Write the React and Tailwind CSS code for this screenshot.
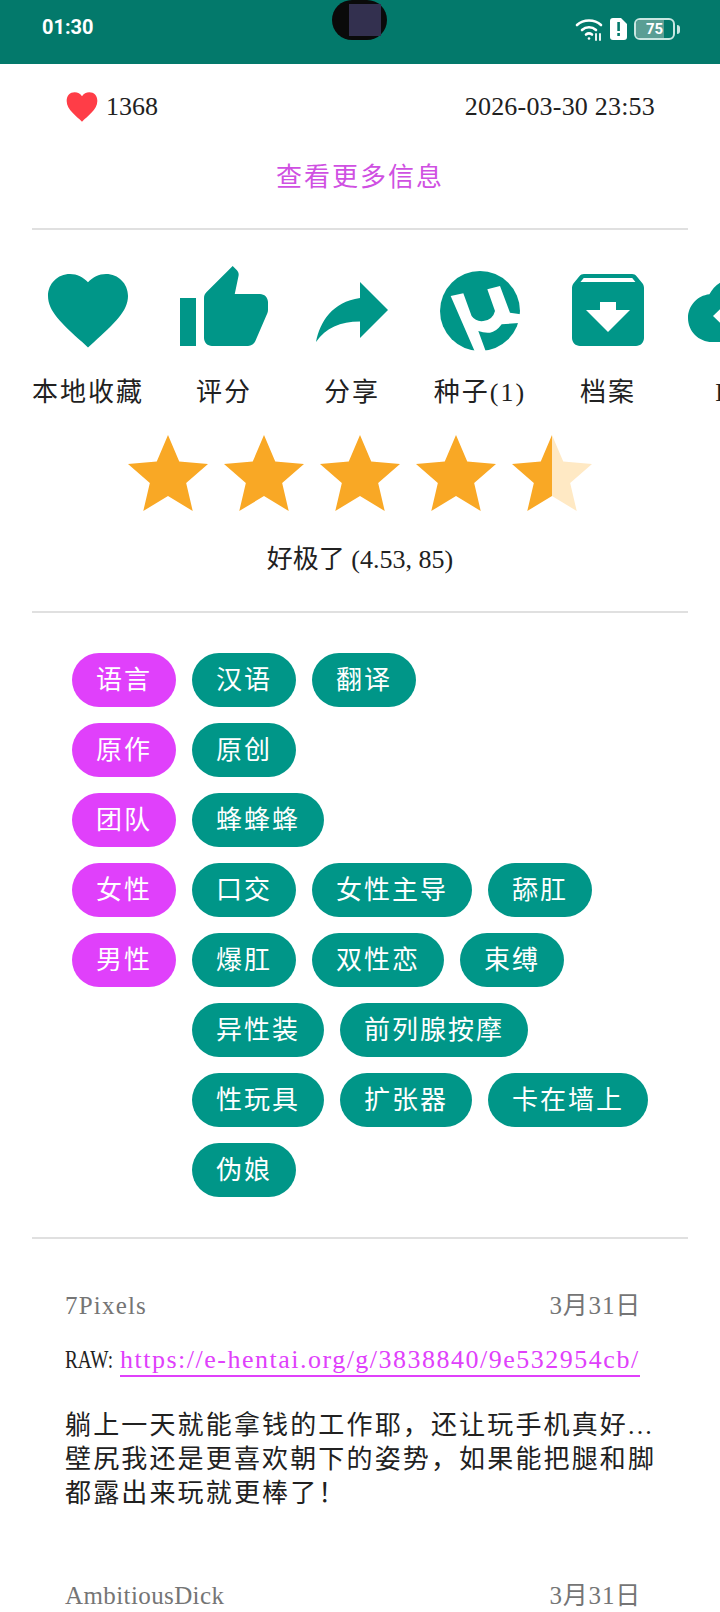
const serif = '"Liberation Serif", "Noto Sans CJK SC", serif';

const actions = [
    { label: '本地收藏', width: 'w-32', d: 'M12 21.35l-1.45-1.32C5.4 15.36 2 12.28 2 8.5 2 5.42 4.42 3 7.5 3c1.74 0 3.41.81 4.5 2.09C13.09 3.81 14.76 3 16.5 3 19.58 3 22 5.42 22 8.5c0 3.78-3.4 6.86-8.55 11.54L12 21.35z' },
    { label: '评分', width: 'w-28', d: 'M1 21h4V9H1v12zm22-11c0-1.1-.9-2-2-2h-6.31l.95-4.57.03-.32c0-.41-.17-.79-.44-1.06L14.17 1 7.59 7.59C7.22 7.95 7 8.45 7 9v10c0 1.1.9 2 2 2h9c.83 0 1.54-.5 1.84-1.22l3.02-7.05c.09-.23.14-.47.14-.73v-2z' },
    { label: '分享', width: 'w-28', d: 'M14 9V5l7 7-7 7v-4.1c-5 0-8.5 1.6-11 5.1 1-5 4-10 11-11z' },
    { label: '种子(1)', width: 'w-28', torrent: true },
    { label: '档案', width: 'w-28', d: 'M20.54 5.23l-1.39-1.68C18.88 3.21 18.47 3 18 3H6c-.47 0-.88.21-1.16.55L3.46 5.23C3.17 5.57 3 6.02 3 6.500V19c0 1.1.9 2 2 2h14c1.1 0 2-.9 2-2V6.500c0-.48-.17-.93-.46-1.27zM12 17.5L6.5 12H10v-2h4v2h3.5L12 17.5zM5.12 5l.81-1h12.12l.81 1H5.12z' },
    { label: 'H@H', width: 'w-28', labelClass: 'ml-[26px]', d: 'M19.35 10.04C18.67 6.59 15.64 4 12 4 9.11 4 6.6 5.64 5.35 8.04 2.34 8.36 0 10.91 0 14c0 3.31 2.69 6 6 6h13c2.76 0 5-2.24 5-5 0-2.64-2.05-4.78-4.65-4.96zM6.25 13.500L11 9v3h6v3h-6v3z' },
];

const tagGroups = [
    { name: '语言', tags: ['汉语', '翻译'] },
    { name: '原作', tags: ['原创'] },
    { name: '团队', tags: ['蜂蜂蜂'] },
    { name: '女性', tags: ['口交', '女性主导', '舔肛'] },
    { name: '男性', tags: ['爆肛', '双性恋', '束缚', '异性装', '前列腺按摩', '性玩具', '扩张器', '卡在墙上', '伪娘'] },
];

const starPath = 'M12 17.27L18.18 21l-1.64-7.03L22 9.24l-7.19-.61L12 2 9.19 8.63 2 9.24l5.46 4.73L5.82 21z';

function ActionIcon({ action }) {
    return (
        <svg viewBox="0 0 24 24" className="w-24 h-24 fill-[#009688]">
            {action.torrent ? (
                <>
                    <circle cx="12" cy="12.250" r="10" />
                    <path
                        d="M4.670 8.500L7.830 7.830L9.900 13.500Q11 15 12.830 14.750Q15.200 14.500 15.750 12.250L13.830 6.830L17 6L19.500 12.670L22.600 13.100L22.600 15.170L17.420 15.580Q16 17.500 14.500 17.670Q13 17.800 11.580 17.250L13.500 22.500L10.750 22.500Z"
                        fill="white"
                    />
                </>
            ) : (
                <path d={action.d} fillRule="evenodd" />
            )}
        </svg>
    );
}

function Star({ half }) {
    return (
        <svg viewBox="0 0 24 24" className="w-24 h-24">
            {half ? (
                <>
                    <path d="M12 2v15.27L5.82 21l1.64-7.03L2 9.24l7.19-.61z" fill="#f9a825" />
                    <path d="M12 2v15.27L18.18 21l-1.64-7.03L22 9.24l-7.19-.61z" fill="#ffe9c4" />
                </>
            ) : (
                <path d={starPath} fill="#f9a825" />
            )}
        </svg>
    );
}

function Pill({ text, color }) {
    return (
        <span className={'h-[54px] px-6 rounded-[27px] flex items-center text-white text-[26px] tracking-[2px] ' + color}>
            {text}
        </span>
    );
}

function Divider() {
    return <div className="h-0.5 mx-8 bg-[#e0e0e0]" />;
}

function StatusBar() {
    return (
        <div className="relative h-16 bg-[#03796b] flex items-start justify-between pl-[42px] pr-[40px] pt-[15px]">
            <span className="text-white font-bold text-[20px] leading-[24px] font-['Roboto']">01:30</span>
            <div className="absolute left-[332px] top-0 w-[55px] h-[40px] rounded-[20px] bg-[#0a0a0a] flex justify-center">
                <div className="w-[32px] h-[32px] mt-[4px] ml-[10px] bg-[#33304f]" />
            </div>
            <div className="flex items-center gap-[7px] h-[24px] mt-[2px]">
                <svg viewBox="0 0 28 24" className="w-7 h-6" fill="none" stroke="white" strokeWidth="2.6" strokeLinecap="round">
                    <path d="M2 8c6.5-6 17.5-6 24 0" />
                    <path d="M7 13c4-3.6 10-3.6 14 0" />
                    <path d="M11 17.500c1.800-1.400 4.200-1.400 6 0" />
                    <circle cx="14" cy="21.500" r="1.300" fill="white" stroke="none" />
                    <path d="M21 17v6M25 17v6" strokeWidth="1.800" />
                </svg>
                <svg viewBox="0 0 17 22" className="w-[17px] h-[22px]">
                    <path d="M3 0h8l6 6v13a3 3 0 0 1-3 3H3a3 3 0 0 1-3-3V3a3 3 0 0 1 3-3z" fill="white" />
                    <rect x="7.300" y="4" width="2.600" height="9" fill="#03796b" />
                    <rect x="7.300" y="15" width="2.600" height="3" fill="#03796b" />
                </svg>
                <div className="relative w-[41px] h-[22px] rounded-[6px] border-2 border-[#c9e6e1] overflow-hidden flex items-center justify-center">
                    <div className="absolute left-0 top-0 bottom-0 w-[75%] bg-[#5a9e94]" />
                    <span className="relative text-white text-[15px] font-bold font-['Roboto'] leading-none">75</span>
                </div>
                <div className="w-[3px] h-[9px] -ml-[5px] bg-[#c9e6e1] rounded-r-sm" />
            </div>
        </div>
    );
}

function CommentHead({ name, tracking }) {
    return (
        <div className="flex justify-between text-[25px] leading-[34px] text-[#757575]">
            <span className={tracking}>{name}</span>
            <span className="tracking-[0.8px]">3月31日</span>
        </div>
    );
}

export default function App() {
    return (
        <div className="w-[720px] h-[1612px] overflow-hidden bg-white" style={{ fontFamily: serif }}>
            <StatusBar />

            <div className="flex items-center justify-between pl-[66px] pr-[65px] pt-[15px] h-[54px] box-content text-[#212121] text-[26px]">
                <div className="flex items-center gap-2">
                    <svg viewBox="0 0 24 24" className="w-8 h-8 mt-[2px]">
                        <path d="M12 23C8 19 .5 14 .5 7.500 .5 3.500 3 1 6.500 1c2.300 0 4.300 1.200 5.500 3 1.200-1.800 3.200-3 5.500-3 3.500 0 6 2.500 6 6.500C23.500 14 16 19 12 23z" fill="#ff3d47" />
                    </svg>
                    <span>1368</span>
                </div>
                <span className="tracking-[0.2px]">2026-03-30 23:53</span>
            </div>

            <div className="mt-[26px] mb-[31px] text-center text-[26px] leading-[38px] tracking-[2px] text-[#cf50e2]">查看更多信息</div>

            <Divider />

            <div className="flex pl-6 gap-4 mt-[32px] overflow-hidden">
                {actions.map((a) => (
                    <div key={a.label} className={'flex flex-col items-center shrink-0 ' + a.width}>
                        <ActionIcon action={a} />
                        <span className={'mt-[18px] text-[26px] leading-[34px] tracking-[2px] text-[#212121] whitespace-nowrap ' + (a.labelClass || '')}>{a.label}</span>
                    </div>
                ))}
            </div>

            <div className="flex justify-center mt-[17px]">
                {[0, 1, 2, 3].map((i) => (
                    <Star key={i} />
                ))}
                <Star half />
            </div>

            <div className="text-center text-[26px] leading-[34px] mt-[20px] text-[#212121]">好极了 (4.53, 85)</div>

            <div className="mt-[34px]">
                <Divider />
            </div>

            <div className="flex flex-col gap-4 pl-[72px] pr-[60px] pt-[40px] pb-[40px]">
                {tagGroups.map((g) => (
                    <div key={g.name} className="flex items-start gap-4">
                        <Pill text={g.name} color="bg-[#e040fb]" />
                        <div className="flex flex-wrap gap-4 flex-1">
                            {g.tags.map((t) => (
                                <Pill key={t} text={t} color="bg-[#009688]" />
                            ))}
                        </div>
                    </div>
                ))}
            </div>

            <Divider />

            <div className="pl-[65px] pr-[79px]">
                <div className="mt-[50px]">
                    <CommentHead name="7Pixels" tracking="tracking-[1.2px]" />
                </div>
                <div className="mt-[20px] flex items-baseline text-[26px] leading-[34px] text-[#212121] whitespace-nowrap">
                    <span className="inline-block w-[55px] origin-left scale-x-[0.74]">RAW:</span>
                    <a className="inline-block leading-[30px] text-[#e040fb] border-b-2 border-[#e040fb] tracking-[1.5px]" href="#raw">https://e-hentai.org/g/3838840/9e532954cb/</a>
                </div>
                <div className="mt-[32px] w-[600px] text-[26px] leading-[34px] tracking-[2.15px] text-[#212121]">
                    <p className="whitespace-nowrap">躺上一天就能拿钱的工作耶，还让玩手机真好...</p>
                    <p className="whitespace-nowrap">壁尻我还是更喜欢朝下的姿势，如果能把腿和脚</p>
                    <p className="whitespace-nowrap">都露出来玩就更棒了！</p>
                </div>
                <div className="mt-[68px]">
                    <CommentHead name="AmbitiousDick" tracking="tracking-[0.4px]" />
                </div>
            </div>
        </div>
    );
}
